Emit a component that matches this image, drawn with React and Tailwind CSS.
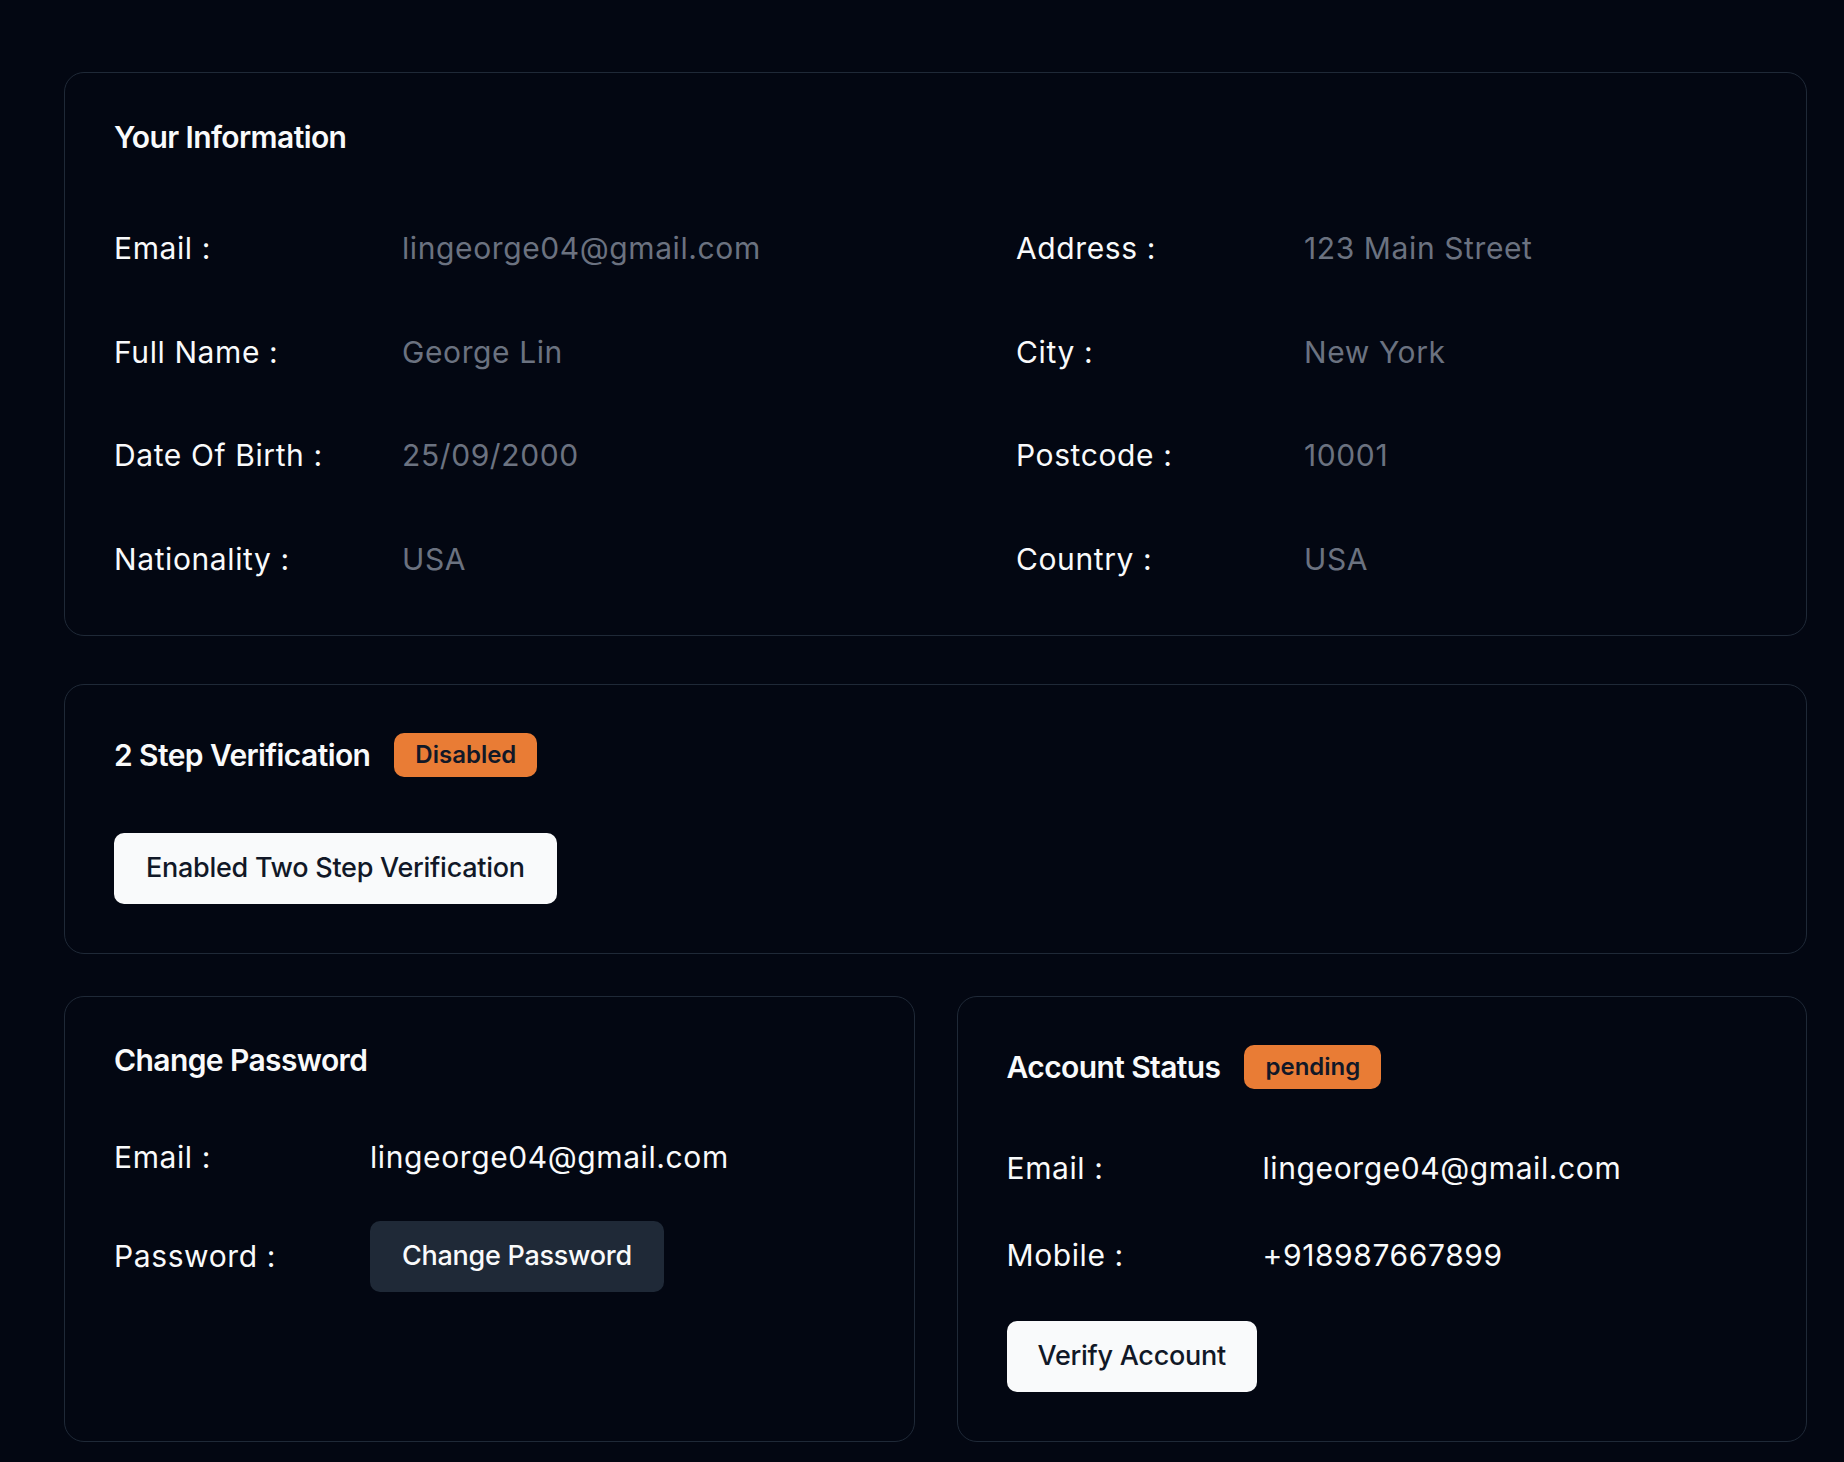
const font = { fontFamily: 'Inter, "Open Sans", sans-serif' }

const info = [
    ['Email :', 'lingeorge04@gmail.com', 'Address :', '123 Main Street'],
    ['Full Name :', 'George Lin', 'City :', 'New York'],
    ['Date Of Birth :', '25/09/2000', 'Postcode :', '10001'],
    ['Nationality :', 'USA', 'Country :', 'USA'],
]

function Title({ children }) {
    return (
        <h2 className="text-[30px] leading-[40px] font-semibold tracking-[-0.02em] text-[#f9fafb]">
            {children}
        </h2>
    )
}

function Badge({ children }) {
    return (
        <span className="inline-flex h-[44px] items-center rounded-[10px] bg-[#e97c35] px-[21px] text-[24px] font-semibold leading-[32px] text-[#111827]">
            {children}
        </span>
    )
}

function Row({ label, value, labelWidth, valueClass = 'text-[#f9fafb]' }) {
    return (
        <div className="flex items-center text-[30px] leading-[40px] tracking-[0.02em]">
            <span className={`${labelWidth} shrink-0 text-[#f9fafb]`}>{label}</span>
            <span className={valueClass}>{value}</span>
        </div>
    )
}

export default function App() {
    return (
        <div className="min-h-screen bg-[#030712] pt-[72px] pl-[64px] pr-[37px] pb-[19px]" style={font}>
            {/* Your Information */}
            <section className="rounded-[20px] border border-[#1f2937] px-[49px] pt-[44px] pb-[56px]">
                <Title>Your Information</Title>
                <div className="mt-[71px] grid grid-cols-2 gap-x-[161px] gap-y-[63.5px]">
                    {info.map(([l1, v1, l2, v2]) => (
                        <div key={l1} className="contents">
                            <Row label={l1} value={v1} labelWidth="w-[288px]" valueClass="text-[#6b7280]" />
                            <Row label={l2} value={v2} labelWidth="w-[288px]" valueClass="text-[#6b7280]" />
                        </div>
                    ))}
                </div>
            </section>

            {/* 2 Step Verification */}
            <section className="mt-[48px] rounded-[20px] border border-[#1f2937] px-[49px] pt-[48px] pb-[49px]">
                <div className="flex items-center gap-6">
                    <Title>2 Step Verification</Title>
                    <Badge>Disabled</Badge>
                </div>
                <button className="mt-[56px] flex h-[71px] items-center rounded-[10px] bg-[#f9fafb] px-[32px] text-[27px] font-medium leading-[36px] tracking-[-0.01em] text-[#111827]">
                    Enabled Two Step Verification
                </button>
            </section>

            <div className="mt-[42px] grid grid-cols-2 gap-[42px]">
                {/* Change Password */}
                <section className="rounded-[20px] border border-[#1f2937] px-[49px] pt-[43px] pb-[49px]">
                    <Title>Change Password</Title>
                    <div className="mt-[57px]">
                        <Row label="Email :" value="lingeorge04@gmail.com" labelWidth="w-[256px]" />
                    </div>
                    <div className="mt-[44px] flex items-center text-[30px] leading-[40px] tracking-[0.02em]">
                        <span className="w-[256px] shrink-0 text-[#f9fafb]">Password :</span>
                        <button className="flex h-[71px] items-center rounded-[10px] bg-[#1f2937] px-[32px] text-[27px] font-medium leading-[36px] tracking-[-0.01em] text-[#f9fafb]">
                            Change Password
                        </button>
                    </div>
                </section>

                {/* Account Status */}
                <section className="rounded-[20px] border border-[#1f2937] px-[49px] pt-[48px] pb-[49px]">
                    <div className="flex items-center gap-6">
                        <Title>Account Status</Title>
                        <Badge>pending</Badge>
                    </div>
                    <div className="mt-[59px]">
                        <Row label="Email :" value="lingeorge04@gmail.com" labelWidth="w-[256px]" />
                    </div>
                    <div className="mt-[47px]">
                        <Row label="Mobile :" value="+918987667899" labelWidth="w-[256px]" />
                    </div>
                    <button className="mt-[46px] flex h-[71px] items-center rounded-[10px] bg-[#f9fafb] px-[31px] text-[27px] font-medium leading-[36px] tracking-[-0.01em] text-[#111827]">
                        Verify Account
                    </button>
                </section>
            </div>
        </div>
    )
}
